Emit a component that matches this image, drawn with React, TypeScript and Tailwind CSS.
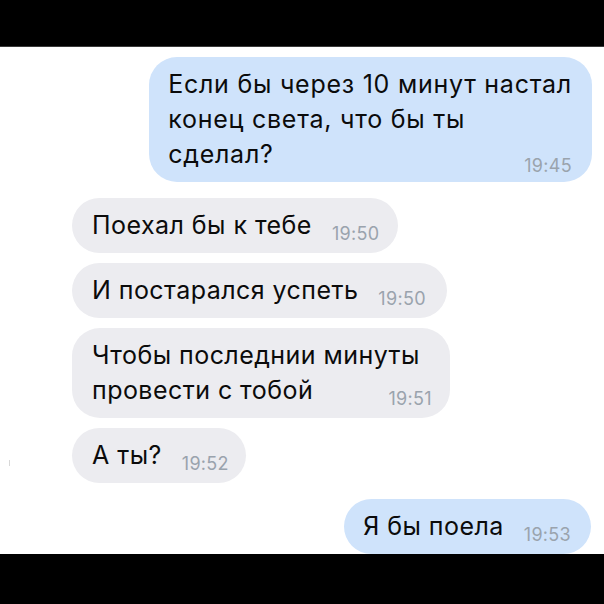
import React from "react";

const textCls = "text-[25px] leading-[35px] text-[#0b0b0b] tracking-[0.45px]";
const timeCls = "text-[18px] leading-[20px] text-[#9aa3ad] tracking-[0.3px] whitespace-nowrap";

function Time({ t, dy = "translate-y-[6px]" }: { t: string; dy?: string }) {
  return <span className={`${timeCls} ${dy}`}>{t}</span>;
}

function Single({ text, time, gap = "ml-[20px]" }: { text: string; time: string; gap?: string }) {
  return (
    <div className="flex items-baseline">
      <span className="whitespace-nowrap">{text}</span>
      <span className={`${gap} inline-flex`}>
        <Time t={time} />
      </span>
    </div>
  );
}

export default function App() {
  return (
    <div className="w-[604px] h-[604px] bg-black flex flex-col font-['Inter','Liberation_Sans',sans-serif] overflow-hidden">
      <div className="h-[47px] shrink-0 bg-black border-b border-[#3a3a3a]" />
      <div className={`relative h-[507px] shrink-0 bg-white overflow-hidden flex flex-col pt-[10px] ${textCls}`}>
        {/* 1 */}
        <div className="flex justify-end pr-[12px]">
          <div className="rounded-[28px] bg-[#cfe3fb] pl-[19px] pr-[20px] py-[10px] tracking-[0.75px]">
            <div className="whitespace-nowrap">Если бы через 10 минут настал</div>
            <div className="whitespace-nowrap">конец света, что бы ты</div>
            <div className="flex items-baseline justify-between">
              <span>сделал?</span>
              <Time t="19:45" dy="translate-y-[9px]" />
            </div>
          </div>
        </div>

        {/* gray */}
        <div className="flex flex-col items-start pl-[72px] mt-[16px] gap-[10px]">
          <div className="rounded-[28px] bg-[#ececf0] pl-[20px] pr-[19px] py-[10px]">
            <Single text="Поехал бы к тебе" time="19:50" />
          </div>
          <div className="rounded-[28px] bg-[#ececf0] pl-[20px] pr-[21px] py-[10px]">
            <Single text="И постарался успеть" time="19:50" />
          </div>
          <div className="rounded-[28px] bg-[#ececf0] pl-[20px] pr-[18px] py-[10px]">
            <div className="whitespace-nowrap pr-[12px]">Чтобы последнии минуты</div>
            <div className="flex items-baseline justify-between">
              <span className="whitespace-nowrap">провести с тобой</span>
              <Time t="19:51" />
            </div>
          </div>
          <div className="rounded-[28px] bg-[#ececf0] pl-[20px] pr-[17px] py-[10px]">
            <Single text="А ты?" time="19:52" />
          </div>
        </div>

        {/* last blue */}
        <div className="flex justify-end pr-[13px] mt-[16px]">
          <div className="rounded-[28px] bg-[#cfe3fb] pl-[19px] pr-[20px] py-[10px]">
            <Single text="Я бы поела" time="19:53" />
          </div>
        </div>

        <div className="absolute left-[9px] top-[413px] w-[1px] h-[6px] bg-[#d8d8d8]" />
      </div>
      <div className="flex-1 bg-black" />
    </div>
  );
}
